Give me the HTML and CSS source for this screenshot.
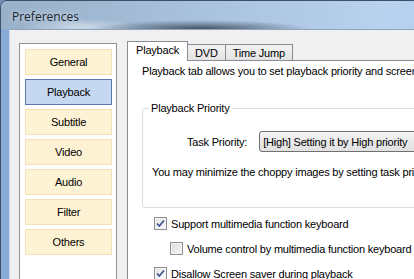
FILE: index.html
```html
<!DOCTYPE html>
<html lang="en">
<head>
    <meta charset="UTF-8">
    <meta name="viewport" content="width=device-width, initial-scale=1.0">
    <title>Preferences</title>
    <link rel="stylesheet" href="styles.css">
</head>
<body>
    <div class="window">
        <div class="titlebar">
            <span class="title">Preferences</span>
        </div>
        <div class="client">
            <div class="sidebar">
                <div class="nav-btn">General</div>
                <div class="nav-btn active">Playback</div>
                <div class="nav-btn">Subtitle</div>
                <div class="nav-btn">Video</div>
                <div class="nav-btn">Audio</div>
                <div class="nav-btn">Filter</div>
                <div class="nav-btn">Others</div>
            </div>

            <div class="tabs">
                <div class="tab-strip">
                    <div class="tab selected">Playback</div>
                    <div class="tab">DVD</div>
                    <div class="tab">Time Jump</div>
                </div>
                <div class="tab-page">
                    <p class="intro">Playback tab allows you to set playback priority and screen saver options.</p>

                    <fieldset class="group">
                        <legend>Playback Priority</legend>
                        <div class="field-row">
                            <span class="field-label">Task Priority:</span>
                            <div class="combo">[High] Setting it by High priority</div>
                        </div>
                        <p class="note">You may minimize the choppy images by setting task priority higher.</p>
                    </fieldset>

                    <div class="check-row">
                        <span class="cb checked">
                            <svg width="11" height="11" viewBox="0 0 11 11"><path d="M2 5.5 L4.3 8 L9 2.5" fill="none" stroke="#41588f" stroke-width="1.8"/></svg>
                        </span>
                        Support multimedia function keyboard
                    </div>
                    <div class="check-row sub">
                        <span class="cb"></span>
                        Volume control by multimedia function keyboard
                    </div>
                    <div class="check-row">
                        <span class="cb checked">
                            <svg width="11" height="11" viewBox="0 0 11 11"><path d="M2 5.5 L4.3 8 L9 2.5" fill="none" stroke="#41588f" stroke-width="1.8"/></svg>
                        </span>
                        Disallow Screen saver during playback
                    </div>
                </div>
            </div>
        </div>
    </div>
</body>
</html>
```

FILE: styles.css
```css
html, body {
    margin: 0;
    padding: 0;
}

body {
    width: 414px;
    height: 279px;
    overflow: hidden;
    background: #6f8fb5;
    font-family: "Liberation Sans", Arial, sans-serif;
    font-size: 11px;
    letter-spacing: -0.2px;
    color: #000;
}

.window {
    width: 640px;
    height: 340px;
    border: 1px solid #3d5069;
    border-radius: 7px 7px 0 0;
    background: #88acd8;
    box-sizing: border-box;
}

.titlebar {
    height: 28px;
    padding: 2px 0 0 11px;
    box-sizing: border-box;
    display: flex;
    align-items: center;
    border-radius: 6px 6px 0 0;
    background:
        radial-gradient(ellipse 110px 9px at 200px 28px, rgba(35, 45, 58, 0.75), rgba(35, 45, 58, 0)),
        radial-gradient(ellipse 60px 8px at 80px 26px, rgba(235, 240, 245, 0.6), rgba(235, 240, 245, 0)),
        linear-gradient(to right, #98b0c9 0%, #a8c1dc 30%, #b8d2ef 60%, #a7c7ec 100%);
}

.title {
    font-family: "Open Sans", "Noto Sans", sans-serif;
    font-size: 12px;
    letter-spacing: 0;
    color: #1e2630;
    text-shadow: 0 0 6px rgba(255, 255, 255, 0.8);
}

.client {
    display: flex;
    margin-left: 8px;
    height: 320px;
    padding: 13px 0 0 9px;
    border-top: 1px solid #8fa5bf;
    border-left: 1px solid #c9d8ea;
    background: #f0f0f0;
}

/* left navigation */
.sidebar {
    width: 98px;
    height: 300px;
    box-sizing: border-box;
    padding: 5px 4px 0 5px;
    border: 1px solid #8e939b;
    background: #fff;
}

.nav-btn {
    height: 26px;
    margin-bottom: 4px;
    box-sizing: border-box;
    display: flex;
    align-items: center;
    justify-content: center;
    background: #fdf2d3;
    border: 1px solid #f2e2b6;
}

.nav-btn.active {
    background: #c6d8f0;
    border-color: #5877ad;
}

/* tab control */
.tabs {
    margin: -2px 0 0 10px;
    flex: 1;
}

.tab-strip {
    display: flex;
    align-items: flex-end;
    height: 19px;
}

.tab {
    height: 15px;
    padding: 0 7px;
    margin-left: -1px;
    display: flex;
    align-items: center;
    border: 1px solid #898c95;
    border-bottom: none;
    background: linear-gradient(#f3f3f3, #e3e3e3);
}

.tab.selected {
    position: relative;
    height: 20px;
    margin: 0 0 -1px 0;
    padding: 2px 8px 0;
    box-sizing: border-box;
    align-items: flex-start;
    background: #fff;
}

.tab-page {
    height: 300px;
    padding: 3px 0 0 14px;
    border: 1px solid #898c95;
    background: #fff;
}

.intro {
    margin: 0;
    line-height: 14px;
    white-space: nowrap;
}

.group {
    margin: 23px 0 0 0;
    padding: 0;
    border: 1px solid #d5dfe5;
    border-radius: 3px;
    width: 400px;
}

.group legend {
    margin-left: 6px;
    padding: 0 2px;
    line-height: 14px;
}

.field-row {
    display: flex;
    align-items: center;
    margin: 16px 0 0 44px;
}

.field-label {
    margin-right: 12px;
}

.combo {
    height: 21px;
    width: 260px;
    box-sizing: border-box;
    padding-left: 3px;
    display: flex;
    align-items: center;
    border: 1px solid #707070;
    border-radius: 3px;
    background: linear-gradient(#f4f4f4, #e9e9e9 50%, #e1e1e1);
    white-space: nowrap;
}

.note {
    margin: 13px 0 28px 9px;
    line-height: 14px;
    white-space: nowrap;
}

.check-row {
    display: flex;
    align-items: center;
    height: 17px;
    margin: 7px 0 8px 12px;
    white-space: nowrap;
}

.check-row + .check-row {
    margin-top: 0;
}

.check-row.sub {
    margin-left: 28px;
}

.cb {
    width: 13px;
    height: 13px;
    box-sizing: border-box;
    margin-right: 4px;
    display: flex;
    align-items: center;
    justify-content: center;
    border: 1px solid #8e8f8f;
    background: linear-gradient(135deg, #dadada, #f6f6f6);
    box-shadow: inset 0 0 0 1px #f4f4f4;
}

.cb.checked {
    background: linear-gradient(135deg, #e3e3e3, #fbfbfb);
}
```
